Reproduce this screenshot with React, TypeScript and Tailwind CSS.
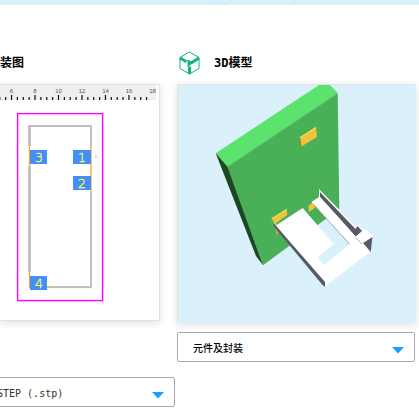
import type { ReactNode } from "react";

const mono = "font-['DejaVu_Sans_Mono','Noto_Sans_CJK_SC',monospace]";

const labels = [6, 8, 10, 12, 14, 16, 18];
const ticks = Array.from({ length: 26 }, (_, i) => i);
const pads = [
  { name: "3", x: 30, y: 150 },
  { name: "1", x: 73, y: 150 },
  { name: "2", x: 73, y: 176 },
  { name: "4", x: 30, y: 276 },
];

function Footprint() {
  return (
    <svg className="block h-[235px] w-[159px]" viewBox="0 85 159 235" role="img" aria-label="封装图">
      <rect x="0" y="85" width="156" height="15" fill="#efefef" />
      {labels.map((n, i) => (
        <text key={n} x={11.5 + i * 23.5} y="93" fontSize="6" textAnchor="middle" fill="#555" className="font-['Liberation_Sans',sans-serif]">
          {n}
        </text>
      ))}
      {ticks.map((i) => (
        <rect key={i} x={i * 5.87 - 0.8} y={i % 4 === 2 ? 95 : 97} width="1.2" height={i % 4 === 2 ? 5 : 3} fill="#111" />
      ))}
      <rect x="17.6" y="113.6" width="85" height="187" fill="none" stroke="#f0f" strokeWidth="1.4" />
      <g fill="none" stroke="#c0c0c0">
        <path d="M29.5 146V125M29.5 166V272" strokeWidth="2.8" />
        <path d="M28.5 126H91V146M91 192V287H50" strokeWidth="2" />
      </g>
      <path d="M29.5 146V166M91 146V192M29.5 272V287H50" fill="none" stroke="#ffa42e" strokeWidth="1.3" />
      {pads.map((p) => (
        <g key={p.name}>
          <rect x={p.x} y={p.y} width={p.x === 30 ? 17 : 18} height="14" fill="#438efa" />
          <text x={p.x + 9} y={p.y + 12} fontSize="13" textAnchor="middle" fill="#ffff40" stroke="#ffff40" strokeWidth=".3" className="font-['DejaVu_Sans',sans-serif] font-extralight">
            {p.name}
          </text>
        </g>
      ))}
      <circle cx="96" cy="156.5" r="1" fill="#bbb" />
    </svg>
  );
}

function Model() {
  return (
    <svg className="block h-[238px] w-[238px]" viewBox="178 85 238 238" role="img" aria-label="3D模型">
      <path d="M215.7 153.3L319 85H330L337.7 93L227.3 167Z" fill="#5be36e" />
      <path d="M227.3 166.7L337.7 93L339.3 209L263 265.3Z" fill="#49b058" />
      <path d="M215.7 153.3L227.5 166.7L263 265.3L256 256Z" fill="#1b4722" />
      <path d="M299.7 137.3L316 127L317 137L301 146.7Z" fill="#efc43c" />
      <path d="M299.7 138L316 127.3" stroke="#fff04a" />
      <path d="M299.9 138L301 146.7" stroke="#967a22" />
      <path d="M271.7 218.7L286.7 209.3L287.3 215L275 224Z" fill="#efc43c" />
      <path d="M271.7 218.7L286.7 209.3" stroke="#fff04a" />
      <path d="M275 226L278 231V235L276.3 234Z" fill="#e2a820" />
      <path d="M308.3 206L312.3 202.7L316 207L309 212Z" fill="#efc43c" />
      <path d="M273 222L276.7 225L302.7 208L333.7 244L317.7 257.3L324.3 265L349.7 244L311.7 202L319 197V189L355.5 226.5L358 224.5L362 230L365 229L373 236L370 252L324.3 287Z" fill="#fff" />
      <path d="M273.5 223L325 282V287L322.5 285L273.5 226Z" fill="#595966" />
      <path d="M320 192L355.5 229L357.5 226L362 231L356 237L352 232.5L320 197Z" fill="#595966" />
      <path d="M320 197L352 232.5L356 237L364 244L349.7 244L311.7 202Z" fill="#fff" />
      <path d="M314 205L349.5 244M355 237L362 244" fill="none" stroke="#85858c" strokeWidth=".7" />
      <path d="M355 237L365 229L373 236L364 243Z" fill="#fff" />
      <path d="M363 243L372.5 237L370.7 252Z" fill="#595966" />
    </svg>
  );
}

function CubeIcon() {
  return (
    <svg className="h-[24px] w-[21px]" viewBox="0 0 21 24" fill="none" stroke="#12b573" aria-hidden="true">
      <path d="M10.5 1L20 6.5V17.5L10.5 23L1 17.5V6.5Z" />
      <path d="M1 7L7.5 10.8M20 7L12.5 11.8M10.5 15.5V23" strokeWidth="3" />
      <path d="M8.5 8.5L15 11.5L8.5 16Z" fill="#12b573" stroke="none" />
    </svg>
  );
}

function Dropdown({ label, className, children }: { label: string; className: string; children: ReactNode }) {
  return (
    <div className={`relative ${className}`}>
      <select aria-label={label} className={`block h-[30px] w-full appearance-none rounded-xs border border-[#a9a9a9] bg-white pt-[2px] pl-[15px] text-[10px] ${mono}`}>
        {children}
      </select>
      <svg className="pointer-events-none absolute top-[15px] right-[11px] h-[7px] w-[12px]" viewBox="0 0 12 7" aria-hidden="true">
        <path d="M0 0H12L6 6.5Z" fill="#0fa2ff" />
      </svg>
    </div>
  );
}

export default function App() {
  return (
    <div className={`min-h-screen overflow-hidden bg-white text-black ${mono}`}>
      <header className="h-[5px] bg-[#daf0fa]">
        <svg className="ml-[205px] h-[5px] w-[100px]" viewBox="0 0 100 5" fill="none" stroke="#cce7f7" aria-hidden="true">
          <path d="M4 0L14 5M13 0L20 3L27 0M20 3V5M38 0L30 5M92 0L84 5" />
        </svg>
      </header>
      <main className="pt-[46px]">
        <div className="grid grid-cols-[160px_1fr] gap-x-[17px] pr-[3px]">
          <section>
            <h2 className="flex h-[24px] items-center text-[12px] font-bold">装图</h2>
            <div className="mt-[9px] border border-l-0 border-[#e5e2e2] shadow-[0_2px_8px_rgba(0,0,0,0.12)]">
              <Footprint />
            </div>
          </section>
          <section>
            <h2 className="flex h-[24px] items-center gap-[14px] pl-[2px] text-[12px] font-bold">
              <CubeIcon />
              3D模型
            </h2>
            <div className="mt-[9px] border-t border-l border-[#e5e2e2] bg-[#daf0fb] shadow-[0_2px_8px_rgba(0,0,0,0.12)]">
              <Model />
            </div>
            <Dropdown label="显示内容" className="mt-[9px] mr-px font-medium">
              <option>元件及封装</option>
            </Dropdown>
          </section>
        </div>
        <Dropdown label="文件格式" className="mt-[15px] -ml-[19px] w-[194px] text-[#333]">
          <option>STEP (.stp)</option>
        </Dropdown>
      </main>
    </div>
  );
}
